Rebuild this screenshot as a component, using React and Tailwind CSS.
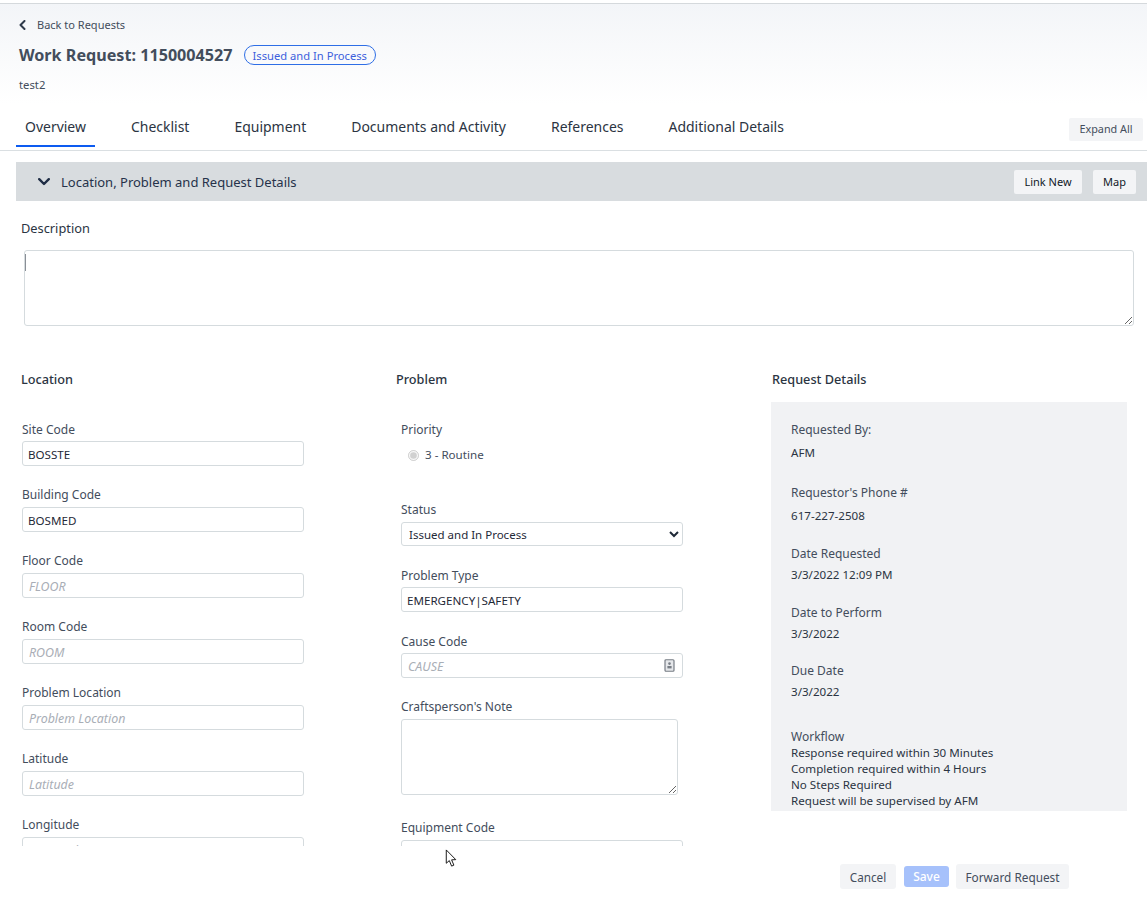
const tabs = ["Overview", "Checklist", "Equipment", "Documents and Activity", "References", "Additional Details"];

const locationFields = [
  { label: "Site Code", value: "BOSSTE" },
  { label: "Building Code", value: "BOSMED" },
  { label: "Floor Code", placeholder: "FLOOR" },
  { label: "Room Code", placeholder: "ROOM" },
  { label: "Problem Location", placeholder: "Problem Location" },
  { label: "Latitude", placeholder: "Latitude" },
  { label: "Longitude", placeholder: "Longitude" },
];

const details = [
  { label: "Requested By:", value: "AFM", gap: "mt-[7px]", next: "mb-[24px]" },
  { label: "Requestor's Phone #", value: "617-227-2508", gap: "mt-[7px]", next: "mb-[22px]" },
  { label: "Date Requested", value: "3/3/2022 12:09 PM", gap: "mt-[5px]", next: "mb-[22px]" },
  { label: "Date to Perform", value: "3/3/2022", gap: "mt-[5px]", next: "mb-[21px]" },
  { label: "Due Date", value: "3/3/2022", gap: "mt-[5px]", next: "mb-[29px]" },
];

const inputCls =
  "block h-[25px] w-full rounded-[3px] border border-[#d5dbde] bg-white px-[5px] pt-[1px] text-[11.6px] text-[#1f2937] placeholder:pl-[1px] placeholder:text-[12.4px] placeholder:italic placeholder:text-[#a9aeb6] outline-none";

function Label({ children }) {
  return <div className="h-[16px] text-[12px] leading-[16px] text-[#434d5c]">{children}</div>;
}

function Field({ label, value, placeholder, first }) {
  return (
    <div>
      <Label>{label}</Label>
      <input readOnly className={`${first ? "mt-[3px]" : "mt-[4px]"} ${inputCls}`} value={value ?? ""} placeholder={placeholder} />
    </div>
  );
}

export default function App() {
  return (
    <div className="relative flex h-[897px] w-[1147px] flex-col overflow-hidden bg-white font-['Noto_Sans',sans-serif]">
      <div className="mt-[3px] h-[1px] shrink-0 bg-[#d5d9dc]" />

      {/* header */}
      <div className="h-[100px] shrink-0 bg-gradient-to-b from-[#f3f5f8] to-white pl-[19px]">
        <div className="mt-[13px] flex h-[16px] items-center text-[11px] text-[#434d5c]">
          <svg className="h-[10px] w-[7px] text-[#2f3a4a]" viewBox="0 0 7 10" fill="none" stroke="currentColor" strokeWidth="2" strokeLinecap="round" strokeLinejoin="round">
            <path d="M5.5 1 L1.5 5 L5.5 9" />
          </svg>
          <span className="ml-[11px]">Back to Requests</span>
        </div>
        <div className="mt-[10px] flex h-[24px] items-center">
          <h1 className="text-[16.15px] font-bold text-[#434d5c]">Work Request: 1150004527</h1>
          <span className="ml-[11px] flex h-[20px] items-center rounded-full border border-[#2e6ee6] px-[8px] pt-[2px] text-[11.2px] text-[#3d5fdc]">
            Issued and In Process
          </span>
        </div>
        <div className="mt-[10px] text-[11.3px] leading-[16px] text-[#434d5c]">test2</div>
      </div>

      {/* tabs */}
      <div className="relative flex h-[47px] shrink-0 border-b border-[#dadfe2] pl-[16px]">
        <div className="flex gap-[27px]">
          {tabs.map((t, i) => (
            <div
              key={t}
              className={`h-[43px] px-[9px] pt-[13px] text-[13.97px] leading-[20px] text-[#2b3442] ${i === 0 ? "border-b-[2px] border-[#0d5bf0]" : ""}`}
            >
              {t}
            </div>
          ))}
        </div>
        <button className="absolute right-[4px] top-[14px] h-[23px] w-[74px] rounded-[2px] bg-[#f3f4f6] text-[10.8px] text-[#434d5c]">
          Expand All
        </button>
      </div>

      {/* section bar */}
      <div className="mt-[11px] ml-[16px] flex h-[39px] shrink-0 items-center bg-[#d8dcdf] pl-[22px]">
        <svg className="h-[8px] w-[12px] text-[#1f2d45]" viewBox="0 0 12 8" fill="none" stroke="currentColor" strokeWidth="2.4" strokeLinecap="round" strokeLinejoin="round">
          <path d="M1.2 1.2 L6 6 L10.8 1.2" />
        </svg>
        <span className="ml-[11px] pt-[2px] text-[13px] text-[#26324a]">Location, Problem and Request Details</span>
        <button className="ml-auto h-[24px] w-[68px] rounded-[2px] bg-[#f3f4f6] pt-[1px] text-[11px] text-[#111827]">Link New</button>
        <button className="ml-[11px] mr-[11px] h-[24px] w-[43px] rounded-[2px] bg-[#f3f4f6] pt-[1px] text-[11px] text-[#111827]">Map</button>
      </div>

      {/* scroll area */}
      <div className="h-[645px] shrink-0 overflow-hidden">
        <div className="pl-[21px] pt-[19px] text-[12.8px] leading-[17px] text-[#2b3442]">Description</div>
        <div className="relative ml-[24px] mt-[13px] w-[1110px]">
          <textarea readOnly className="block h-[76px] w-full rounded-[3px] border border-[#d5dbde] bg-white outline-none" />
          <div className="absolute left-[1px] top-[4px] h-[17px] w-[1px] bg-[#8a8f96]" />
        </div>

        <div className="mt-[45px] flex">
          {/* location */}
          <div className="w-[376px] shrink-0 pl-[21px]">
            <div className="h-[17px] text-[12.7px] font-medium leading-[17px] text-[#2b3442]">Location</div>
            <div className="ml-[1px] mt-[34px] flex w-[282px] flex-col gap-[21px]">
              {locationFields.map((f, i) => (
                <Field key={f.label} {...f} first={i === 0} />
              ))}
            </div>
          </div>

          {/* problem */}
          <div className="w-[395px] shrink-0">
            <div className="ml-[20px] h-[17px] text-[12.7px] font-medium leading-[17px] text-[#2b3442]">Problem</div>
            <div className="ml-[25px] mt-[34px] w-[282px]">
              <Label>Priority</Label>
              <label className="ml-[7px] mt-[9px] flex h-[16px] items-center text-[11.6px] text-[#434d5c]">
                <input type="radio" checked disabled readOnly className="h-[11px] w-[11px]" />
                <span className="ml-[6px]">3 - Routine</span>
              </label>

              <div className="mt-[39px]">
                <Label>Status</Label>
                <select className="mt-[4px] block h-[24px] w-full rounded-[3px] border border-[#d5dbde] bg-white pl-[3px] text-[11.5px] text-[#1f2937] outline-none" defaultValue="issued">
                  <option value="issued">Issued and In Process</option>
                </select>
              </div>

              <div className="mt-[22px]">
                <Label>Problem Type</Label>
                <input readOnly className={`mt-[3px] ${inputCls}`} value="EMERGENCY|SAFETY" />
              </div>

              <div className="mt-[22px]">
                <Label>Cause Code</Label>
                <div className="relative mt-[3px]">
                  <input readOnly className={inputCls} placeholder="CAUSE" />
                  <svg className="absolute right-[8px] top-[6px] h-[13px] w-[11px] text-[#777d85]" viewBox="0 0 11 13" fill="none">
                    <rect x="1" y="0.75" width="9" height="11.5" rx="1" stroke="currentColor" strokeWidth="1.2" fill="#e5e7ea" />
                    <circle cx="5.5" cy="4.6" r="1.3" fill="currentColor" />
                    <rect x="3.4" y="7" width="4.2" height="2.4" fill="currentColor" />
                  </svg>
                </div>
              </div>

              <div className="mt-[21px]">
                <Label>Craftsperson's Note</Label>
                <textarea readOnly className="mt-[4px] block h-[76px] w-[277px] rounded-[3px] border border-[#d5dbde] bg-white outline-none" />
              </div>

              <div className="mt-[25px]">
                <Label>Equipment Code</Label>
                <input readOnly className={`mt-[4px] ${inputCls}`} />
              </div>
            </div>
          </div>

          {/* request details */}
          <div className="w-[356px] shrink-0">
            <div className="ml-[1px] h-[17px] text-[12.7px] font-medium leading-[17px] text-[#2b3442]">Request Details</div>
            <div className="mt-[14px] h-[409px] w-[356px] bg-[#f1f2f4] pl-[20px] pt-[20px] text-[12px] leading-[16px] text-[#434d5c]">
              {details.map((d) => (
                <div key={d.label} className={d.next}>
                  <div>{d.label}</div>
                  <div className={`${d.gap} text-[11.6px] text-[#2b3442]`}>{d.value}</div>
                </div>
              ))}
              <div>Workflow</div>
              <div className="text-[11.6px] text-[#2b3442]">Response required within 30 Minutes</div>
              <div className="text-[11.6px] text-[#2b3442]">Completion required within 4 Hours</div>
              <div className="text-[11.6px] text-[#2b3442]">No Steps Required</div>
              <div className="text-[11.6px] text-[#2b3442]">Request will be supervised by AFM</div>
            </div>
          </div>
        </div>
      </div>

      {/* footer */}
      <div className="mt-[18px] flex items-center pl-[840px]">
        <button className="h-[25px] w-[56px] rounded-[3px] bg-[#f3f4f6] pt-[2px] text-[11.7px] text-[#434d5c]">Cancel</button>
        <button className="ml-[8px] h-[21px] w-[45px] rounded-[3px] bg-[#a6c1fb] text-[12px] font-medium text-white">Save</button>
        <button className="ml-[7px] h-[25px] w-[113px] rounded-[3px] bg-[#f3f4f6] pt-[2px] text-[11.8px] text-[#434d5c]">Forward Request</button>
      </div>

      {/* mouse pointer */}
      <svg className="absolute left-[445px] top-[849px] h-[19px] w-[13px]" viewBox="0 0 13 20" fill="white" stroke="#111" strokeWidth="1">
        <path d="M1 1 L1 15 L4.2 12.2 L6.6 18 L9 17 L6.6 11.4 L11 11.2 Z" />
      </svg>
    </div>
  );
}
